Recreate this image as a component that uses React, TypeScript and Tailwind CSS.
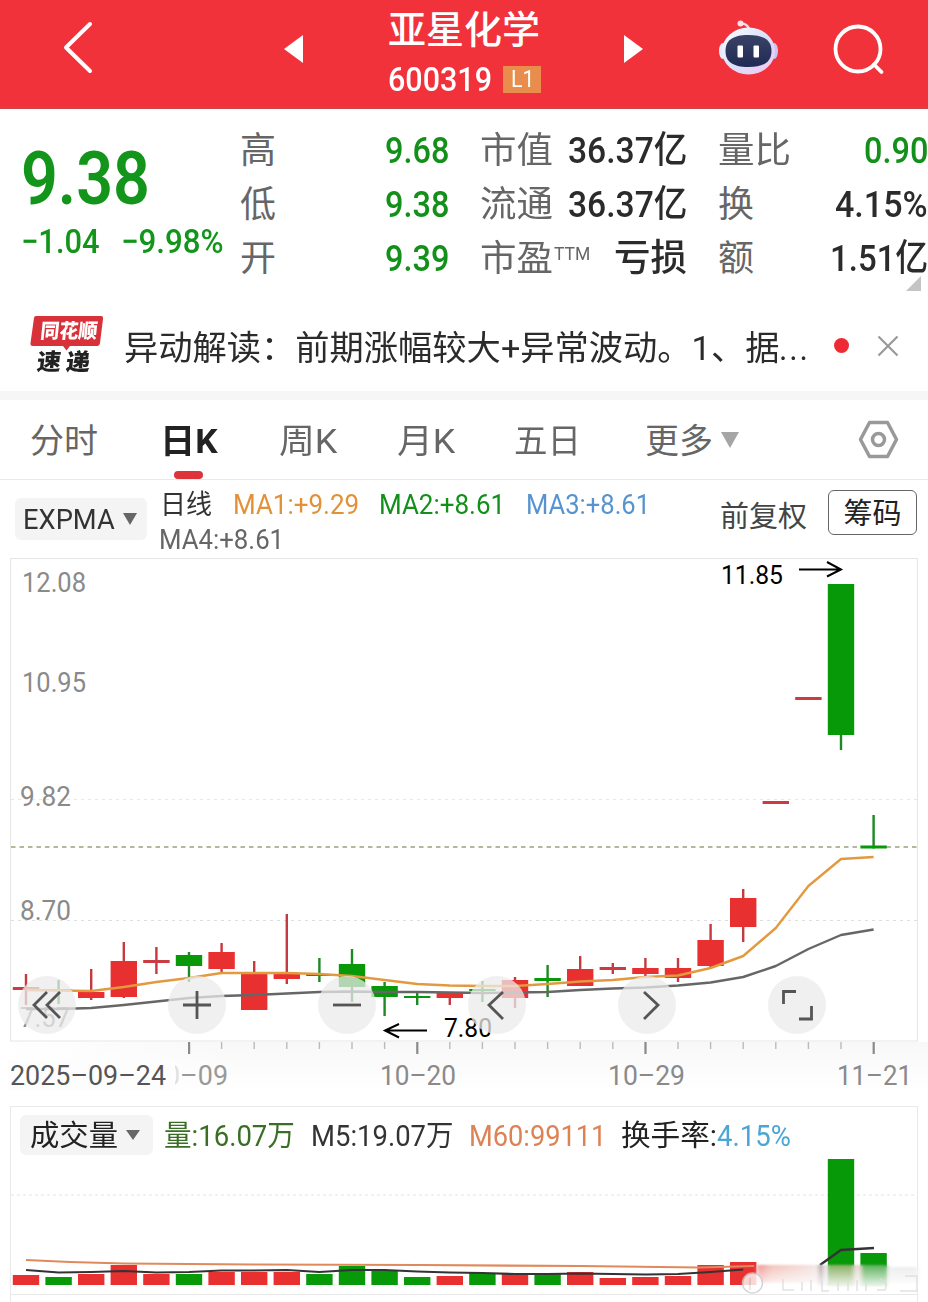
import { useLayoutEffect, useRef, useState, type ReactNode } from "react";

const FONT = "font-[Roboto,'Noto_Sans_CJK_SC',sans-serif]";
const RED = "#e93030";
const GREEN = "#079907";

/** Text squeezed or stretched horizontally to an exact width. */
function Fit({ w, className = "", children }: { w: number; className?: string; children: ReactNode }) {
  const ref = useRef<HTMLSpanElement>(null);
  const [scale, setScale] = useState(1);
  useLayoutEffect(() => {
    if (ref.current && ref.current.offsetWidth) setScale(w / ref.current.offsetWidth);
  }, [w]);
  return (
    <span className={`flex shrink-0 justify-start ${className}`} style={{ width: w }}>
      <span ref={ref} className="block shrink-0 origin-left leading-none whitespace-nowrap" style={{ transform: `scaleX(${scale})` }}>
        {children}
      </span>
    </span>
  );
}

const x = (i: number) => 26 + 32.6 * i;

type Candle = [number, number, number, number, "r" | "g"];
// high, body top, body bottom, low, colour
const CANDLES: Candle[] = [
  [974, 987, 990, 1005, "r"],
  [980, 989, 991, 1004, "g"],
  [969, 992, 998, 1000, "r"],
  [942, 961, 997, 998, "r"],
  [947, 960, 963, 974, "r"],
  [952, 955, 966, 982, "g"],
  [943, 952, 969, 973, "r"],
  [961, 974, 1010, 1010, "r"],
  [914, 974, 979, 984, "r"],
  [958, 974, 976, 982, "g"],
  [949, 964, 987, 1002, "g"],
  [982, 986, 997, 1016, "g"],
  [993, 996, 998, 1005, "g"],
  [992, 992, 998, 1005, "r"],
  [981, 989, 991, 1002, "g"],
  [977, 980, 998, 1008, "r"],
  [965, 978, 981, 997, "g"],
  [956, 969, 986, 986, "r"],
  [963, 967, 970, 974, "r"],
  [958, 968, 974, 976, "r"],
  [958, 968, 978, 982, "r"],
  [924, 940, 966, 969, "r"],
  [889, 898, 927, 942, "r"],
  [801, 801, 804, 804, "r"],
  [697, 697, 700, 700, "r"],
  [584, 584, 735, 750, "g"],
  [815, 845.5, 848.5, 848.5, "g"],
];

const MA1 = [990, 990.5, 991, 987, 982, 978, 973, 973, 973, 974, 976, 980, 984, 985.5, 986, 986, 984, 981.5, 980, 977, 975.5, 968, 956, 928, 886, 859, 857];
const MA4 = [1009, 1009, 1008, 1005, 1001.5, 998, 996, 995, 993.5, 992, 991.5, 992, 992, 992.5, 993, 992.5, 992, 990, 988.5, 987.5, 985.5, 982.5, 977, 966, 949, 935, 929.5];

const VOLUME: [number, number, "r" | "g"][] = [
  [0, 1275, "r"], [1, 1277, "g"], [2, 1274, "r"], [3, 1265, "r"], [4, 1274, "r"], [5, 1274, "g"],
  [6, 1272, "r"], [7, 1272, "r"], [8, 1272, "r"], [9, 1274, "g"], [10, 1266, "g"], [11, 1271, "g"],
  [12, 1277, "g"], [13, 1276, "r"], [14, 1273, "g"], [15, 1273, "r"], [16, 1274, "g"], [17, 1272, "r"],
  [18, 1278, "r"], [19, 1277, "r"], [20, 1276, "r"], [21, 1265, "r"], [22, 1262, "r"], [25, 1159, "g"],
  [26, 1253, "g"],
];
const M5 = [1270, 1272.5, 1272, 1271, 1272.5, 1272, 1270.5, 1270.5, 1270, 1272, 1270, 1270, 1271.5, 1272.5, 1273, 1274, 1274, 1273.5, 1274, 1274.5, 1274, 1272, 1269.5];

const line = (ys: number[]) => ys.map((y, i) => `${x(i)},${y}`).join(" ");
const tone = (c: "r" | "g") => (c === "r" ? RED : GREEN);

function Robot() {
  return (
    <svg width="60" height="58" viewBox="718 18 60 58" className="shrink-0">
      <defs>
        <linearGradient id="shell" x1="0" y1="0" x2="1" y2="1">
          <stop offset="0" stopColor="#fff" />
          <stop offset=".5" stopColor="#d9e2fb" />
          <stop offset="1" stopColor="#f3c4ef" />
        </linearGradient>
        <linearGradient id="visor" x1="0" y1="0" x2="0" y2="1">
          <stop offset="0" stopColor="#3a4266" />
          <stop offset="1" stopColor="#1f2a55" />
        </linearGradient>
      </defs>
      <path d="M741 23.500 Q748 23.500 749 30" fill="none" stroke="#fbd5dd" strokeWidth="2.500" />
      <circle cx="740.5" cy="23.5" r="3" fill="#fbe3ea" />
      <ellipse cx="723" cy="51" rx="4" ry="8" fill="#e6ebfc" />
      <ellipse cx="774" cy="51" rx="4" ry="8" fill="#c9c8f3" />
      <ellipse cx="748.500" cy="51" rx="26.500" ry="23.500" fill="url(#shell)" />
      <path d="M748.500 35 C765 35 771.500 41 771.500 51 C771.500 61 765 67 748.500 67 C732 67 725.500 61 725.500 51 C725.500 41 732 35 748.500 35 Z" fill="url(#visor)" />
      <rect x="737.500" y="45.500" width="5.500" height="12" rx="1" fill="#fff" />
      <rect x="753.500" y="45.500" width="5.500" height="12" rx="1" fill="#fff" />
    </svg>
  );
}

function Header() {
  return (
    <header className="flex h-[109px] items-center border-b-2 border-[#c9474c] bg-[#f2323a] text-white">
      <svg width="34" height="56" viewBox="60 20 34 56" className="mt-[-12px] ml-[60px] shrink-0" fill="none" stroke="#fff" strokeWidth="4" strokeLinecap="round" strokeLinejoin="round">
        <path d="M90 24 L66 47.500 L90 71" />
      </svg>
      <svg width="20" height="30" className="mt-[-9px] ml-[190px] shrink-0 self-center" viewBox="0 0 20 30">
        <path d="M0 15 L19 1 V29 Z" fill="#fff" />
      </svg>
      <div className="ml-[84px] flex h-full w-[154px] flex-col">
        <Fit w={152} className="mt-[11px] text-[38px] font-medium">亚星化学</Fit>
        <div className="mt-[13px] flex items-center">
          <Fit w={104} className="text-[34px] font-medium">600319</Fit>
          <span className="ml-[11px] flex h-[27px] w-[38px] items-center justify-center bg-[#e98d4c]">
            <Fit w={23} className="text-[24px]">L1</Fit>
          </span>
        </div>
      </div>
      <svg width="20" height="30" className="mt-[-9px] ml-[81px] shrink-0" viewBox="0 0 20 30">
        <path d="M20 15 L1 1 V29 Z" fill="#fff" />
      </svg>
      <div className="mt-[-14px] ml-[75px] flex items-center">
        <Robot />
        <svg width="54" height="54" viewBox="832 21 54 54" className="mt-[4px] ml-[54px]" fill="none" stroke="#fff" strokeWidth="3.800">
          <circle cx="858" cy="48" r="22.500" />
          <path d="M874 63.500 L881.500 71" strokeLinecap="round" />
        </svg>
      </div>
    </header>
  );
}

function Stat({ label, lw, value, vw, green, sup }: { label: string; lw: number; value: string; vw: number; green?: boolean; sup?: string }) {
  return (
    <div className="flex h-[54px] items-center justify-between">
      <div className="mt-[2px] flex items-start">
        <Fit w={lw} className="text-[36px] text-[#666]">{label}</Fit>
        {sup && <Fit w={36} className="mt-[3px] ml-[1px] text-[19px] text-[#666]">{sup}</Fit>}
      </div>
      <Fit w={vw} className={`mt-[1px] text-[37px] font-medium ${green ? "text-[#12901a]" : "text-[#2b2b2b]"}`}>{value}</Fit>
    </div>
  );
}

function Quote() {
  return (
    <section className="relative flex h-[191px]">
      <div className="w-[240px] pt-[33px] pl-[21px] text-[#12951a]">
        <Fit w={129} className="text-[74px] font-semibold">9.38</Fit>
        <div className="mt-[8px] flex">
          <Fit w={79} className="text-[34px] font-medium">−1.04</Fit>
          <Fit w={103} className="ml-[21px] text-[34px] font-medium">−9.98%</Fit>
        </div>
      </div>
      <div className="w-[209px] pt-[14px]">
        <Stat label="高" lw={36} value="9.68" vw={64} green />
        <Stat label="低" lw={36} value="9.38" vw={64} green />
        <Stat label="开" lw={36} value="9.39" vw={64} green />
      </div>
      <div className="ml-[31px] w-[207px] pt-[14px]">
        <Stat label="市值" lw={73} value="36.37亿" vw={119} />
        <Stat label="流通" lw={73} value="36.37亿" vw={119} />
        <Stat label="市盈" lw={73} value="亏损" vw={73} sup="TTM" />
      </div>
      <div className="ml-[31px] w-[210px] pt-[14px]">
        <Stat label="量比" lw={73} value="0.90" vw={64} green />
        <Stat label="换" lw={36} value="4.15%" vw={93} />
        <Stat label="额" lw={36} value="1.51亿" vw={98} />
      </div>
      <svg width="15" height="15" className="absolute top-[167px] left-[906px]" viewBox="0 0 15 15">
        <path d="M15 0 V15 H0 Z" fill="#c4c4c4" />
      </svg>
    </section>
  );
}

function News() {
  return (
    <section className="flex h-[91px] items-center">
      <div className="relative ml-[30px] h-[62px] w-[74px]">
        <svg width="74" height="62" viewBox="30 315 74 62" className="absolute inset-0">
          <path d="M36 316 H101 Q103.500 316 103 319 L100 343 Q99.500 346 97 346 H70 L66.500 350.500 L63 346 H33 Q30 346 30.500 343 L34 318 Q34 316 36 316 Z" fill="#d8313a" />
        </svg>
        <div className="relative flex -skew-x-6 flex-col">
          <Fit w={57} className="mt-[6px] ml-[9px] text-[20px] font-black text-white">同花顺</Fit>
          <div className="mt-[10px] ml-[9px] flex gap-[5px] text-[23px] font-black text-[#222]">
            <Fit w={24}>速</Fit>
            <Fit w={24}>递</Fit>
          </div>
        </div>
      </div>
      <div className="mt-[4px] ml-[20px] flex items-center text-[34px] text-[#2b2b2b]">
        <Fit w={655}>异动解读：前期涨幅较大+异常波动。1、据</Fit>
        <Fit w={31} className="tracking-[2px]">...</Fit>
      </div>
      <span className="ml-[24px] size-[15px] rounded-full bg-[#ee2b32]" />
      <svg width="22" height="22" viewBox="0 0 22 22" className="ml-[28px]" stroke="#999" strokeWidth="2.200">
        <path d="M1.500 1.500 L20.500 20.500 M20.500 1.500 L1.500 20.500" />
      </svg>
    </section>
  );
}

function Tabs() {
  return (
    <nav className="flex h-[80px] items-center border-b border-[#e9e9e9] pt-[2px] pl-[30px] text-[34px] text-[#666]">
      <Fit w={68}>分时</Fit>
      <div className="relative ml-[62px]">
        <Fit w={58} className="font-bold text-[#222]">日K</Fit>
        <span className="absolute top-[47px] left-[14px] h-[8px] w-[29px] rounded-full bg-[#dd333a]" />
      </div>
      <Fit w={58} className="ml-[61px]">周K</Fit>
      <Fit w={58} className="ml-[60px]">月K</Fit>
      <Fit w={67} className="ml-[59px]">五日</Fit>
      <Fit w={68} className="ml-[64px]">更多</Fit>
      <svg width="18" height="16" viewBox="0 0 18 16" className="mt-[-2px] ml-[8px]">
        <path d="M0 0 H18 L9 16 Z" fill="#a5a5a5" />
      </svg>
      <svg width="42" height="42" viewBox="857 418 42 42" className="mt-[-3px] ml-[118px]" fill="none" stroke="#999" strokeWidth="3.500" strokeLinejoin="round">
        <path d="M869.500 422.500 H887.500 L896.500 439.500 L887.500 456.500 H869.500 L860.500 439.500 Z" />
        <circle cx="878.500" cy="439.500" r="6" />
      </svg>
    </nav>
  );
}

function Indicators() {
  return (
    <section className="flex h-[78px] items-start">
      <div className="mt-[18px] ml-[15px] flex h-[42px] w-[132px] items-center rounded-[6px] bg-[#f4f4f4] pl-[8px]">
        <Fit w={92} className="mt-[3px] text-[27px] text-[#333]">EXPMA</Fit>
        <svg width="14" height="12" viewBox="0 0 14 12" className="ml-[8px]"><path d="M0 0 H14 L7 12 Z" fill="#666" /></svg>
      </div>
      <div className="ml-[13px] w-[500px] pt-[12px]">
        <div className="flex text-[27px]">
          <Fit w={52} className="text-[#333]">日线</Fit>
          <Fit w={126} className="ml-[21px] text-[#e39136]">MA1:+9.29</Fit>
          <Fit w={126} className="ml-[20px] text-[#12901a]">MA2:+8.61</Fit>
          <Fit w={124} className="ml-[21px] text-[#5794cf]">MA3:+8.61</Fit>
        </div>
        <Fit w={125} className="mt-[8px] ml-[-1px] text-[27px] text-[#666]">MA4:+8.61</Fit>
      </div>
      <Fit w={87} className="mt-[23px] ml-[60px] text-[29px] text-[#444]">前复权</Fit>
      <div className="mt-[10px] ml-[21px] flex h-[45px] w-[89px] items-center justify-center rounded-[6px] border border-[#666] pt-[4px]">
        <Fit w={58} className="text-[29px] text-[#222]">筹码</Fit>
      </div>
    </section>
  );
}

function ChartText({ x: tx, y, w, size = 27, fill = "#8a8a8a", weight = 400, children }: { x: number; y: number; w: number; size?: number; fill?: string; weight?: number; children: string }) {
  return (
    <text x={tx} y={y} fontSize={size} fontWeight={weight} fill={fill} textLength={w} lengthAdjust="spacingAndGlyphs">{children}</text>
  );
}

const ICONS = [
  <path key="a" d="M29 16 L16 29 L29 42 M42 16 L29 29 L42 42" />,
  <path key="b" d="M15 29 H43 M29 15 V43" />,
  <path key="c" d="M15 29 H43" />,
  <path key="d" d="M35 16 L21 29 L35 43" />,
  <path key="e" d="M26 16 L40 29 L26 43" />,
  <path key="f" d="M15.500 28 V15.500 H28 M43.500 30 V43 H31" />,
];

function PriceChart() {
  return (
    <section className="relative h-[546px]">
      <svg width="928" height="546" viewBox="0 558 928 546" className="block">
        <defs>
          <linearGradient id="floor" x1="0" y1="0" x2="0" y2="1">
            <stop offset="0" stopColor="#f8f8f8" />
            <stop offset="1" stopColor="#fff" />
          </linearGradient>
          <linearGradient id="edge" x1="0" y1="0" x2="1" y2="0">
            <stop offset="0" stopColor="#fff" />
            <stop offset="1" stopColor="#fff" stopOpacity="0" />
          </linearGradient>
        </defs>
        <rect x="0" y="1042" width="928" height="50" fill="url(#floor)" />
        <rect x="0" y="1042" width="240" height="50" fill="url(#edge)" />
        <rect x="10.500" y="558.500" width="907" height="482.500" fill="none" stroke="#e6e6e6" />
        <g stroke="#dedede" strokeDasharray="3 4">
          <path d="M11 799.500 H917" strokeOpacity=".7" />
          <path d="M11 920.500 H917" />
        </g>
        <path d="M11 847 H917" stroke="#a0a07c" strokeWidth="1.500" strokeDasharray="4.500 4" />
        <ChartText x={22} y={592} w={64}>12.08</ChartText>
        <ChartText x={22} y={692} w={64}>10.95</ChartText>
        <ChartText x={20} y={806} w={51}>9.82</ChartText>
        <ChartText x={20} y={920} w={51}>8.70</ChartText>
        <ChartText x={20} y={1027} w={50}>7.57</ChartText>
        {CANDLES.map(([hi, top, bottom, lo, c], i) => (
          <g key={i} fill={tone(c)}>
            <rect x={x(i) - 1.2} y={hi} width="2.400" height={lo - hi} fill={c === "r" ? "#c53a40" : "#1b8a22"} />
            <rect x={x(i) - 13.2} y={top} width="26.400" height={bottom - top} fill={bottom - top < 4 && c === "r" ? "#c93c42" : tone(c)} />
          </g>
        ))}
        <polyline points={line(MA4)} fill="none" stroke="#666" strokeWidth="2.400" strokeLinejoin="round" />
        <polyline points={line(MA1)} fill="none" stroke="#e39a3f" strokeWidth="2.400" strokeLinejoin="round" />
        <g stroke="#000" strokeWidth="2" fill="none">
          <path d="M799 569.500 H841 M827 562 L841 569.500 L827 576.500" />
          <path d="M427 1030.500 H385 M399 1024 L385 1030.500 L399 1037.500" />
        </g>
        <ChartText x={721} y={584} w={62} size={26} fill="#000">11.85</ChartText>
        <ChartText x={444} y={1037} w={48} size={25} fill="#000">7.80</ChartText>
        {CANDLES.slice(5).map((_, k) => {
          const major = k % 7 === 0;
          return <rect key={k} x={x(k + 5) - (major ? 1 : 0.7)} y="1042" width={major ? 2.2 : 1.4} height={major ? 12 : 7} fill={major ? "#8a8a8a" : "#bbb"} />;
        })}
        <ChartText x={165} y={1085} w={63} size={28} fill="#999">0–09</ChartText>
        <rect x="8" y="1060" width="167" height="30" fill="#fdfdfd" />
        <rect x="174" y="1060" width="8" height="30" fill="#fdfdfd" opacity=".7" />
        <ChartText x={10} y={1085} w={156} size={28} fill="#555">2025–09–24</ChartText>
        <ChartText x={380} y={1085} w={76} size={28}>10–20</ChartText>
        <ChartText x={608} y={1085} w={77} size={28}>10–29</ChartText>
        <ChartText x={837} y={1085} w={75} size={28}>11–21</ChartText>
      </svg>
      <div className="absolute top-[418px] left-[18px] flex gap-[92px]">
        {ICONS.map((icon, i) => (
          <button key={i} className="size-[58px] rounded-full bg-[#ebebeb]/75">
            <svg width="58" height="58" viewBox="0 0 58 58" fill="none" stroke="#555" strokeWidth="2.800">{icon}</svg>
          </button>
        ))}
      </div>
    </section>
  );
}

function VolumeChart() {
  return (
    <section className="relative h-[198px] overflow-hidden">
      <svg width="928" height="198" viewBox="0 1104 928 198" className="absolute inset-0">
        <defs>
          <linearGradient id="smear" x1="0" y1="0" x2="1" y2="0">
            <stop offset="0" stopColor="#e88" />
            <stop offset=".2" stopColor="#f2c0b8" />
            <stop offset=".7" stopColor="#f3dcd8" />
            <stop offset="1" stopColor="#eee" />
          </linearGradient>
          <linearGradient id="veil" x1="0" y1="0" x2="0" y2="1">
            <stop offset="0" stopColor="#fff" stopOpacity="0" />
            <stop offset="1" stopColor="#fff" />
          </linearGradient>
          <filter id="soft" x="-10%" y="-40%" width="120%" height="180%"><feGaussianBlur stdDeviation="2 1" /></filter>
        </defs>
        <rect x="10.500" y="1106.500" width="907" height="188" fill="none" stroke="#e9e9e9" />
        <path d="M10.500 1295 V1302 M917.500 1295 V1302" stroke="#e9e9e9" />
        <path d="M11 1195 H917" stroke="#e4e4e4" strokeDasharray="3 3" />
        {VOLUME.map(([i, top, c]) => (
          <rect key={i} x={x(i) - 13.2} y={top} width="26.400" height={1285 - top} fill={tone(c)} />
        ))}
        <polyline points="26,1260 70,1262 124,1263.500 254,1264.500 420,1265 580,1266 700,1267.500 754,1266" fill="none" stroke="#df8a5c" strokeWidth="2.200" />
        <polyline points={line(M5)} fill="none" stroke="#333" strokeWidth="2.200" />
        <polyline points="820,1265 841,1250 874,1248" fill="none" stroke="#333" strokeWidth="2.400" />
        <g filter="url(#soft)">
          <rect x="757" y="1265" width="70" height="18" fill="url(#smear)" />
          <rect x="819" y="1265" width="4" height="21" fill="#9c7f84" />
          <rect x="828" y="1265" width="26" height="22" fill="#86ad5e" />
          <rect x="854" y="1265" width="7" height="20" fill="#ead9d4" />
          <rect x="861" y="1265" width="26" height="22" fill="#55ae55" />
          <rect x="888" y="1267" width="30" height="16" fill="#ececec" />
        </g>
        <rect x="757" y="1264" width="163" height="25" fill="url(#veil)" />
        <g fill="none" stroke="#dcdcdc" strokeWidth="1.500" opacity=".8">
          <circle cx="752.500" cy="1283" r="10" fill="#fff" stroke="#ccc" />
          <path d="M750 1278 V1290 M783 1279 V1290 H794 M802 1282 V1291 M811 1280 V1291 M822 1281 V1291 H829 M838 1281 V1291 M848 1281 V1291 M857 1280 V1291 M866 1282 V1291 M880 1279 Q889 1282 885 1290 H877 M900 1291 H917 V1276 H905" />
        </g>
      </svg>
      <div className="relative flex h-[62px] items-center pl-[20px]">
        <div className="flex h-[40px] w-[133px] items-center rounded-[6px] bg-[#f4f4f4] pl-[10px]">
          <Fit w={88} className="mt-[3px] text-[29px] text-[#222]">成交量</Fit>
          <svg width="14" height="10" viewBox="0 0 14 10" className="ml-[8px]"><path d="M0 0 H14 L7 10 Z" fill="#666" /></svg>
        </div>
        <div className="mt-[2px] flex text-[29px]">
          <Fit w={131} className="ml-[11px] text-[#3b6e25]">量:16.07万</Fit>
          <Fit w={142} className="ml-[16px] text-[#333]">M5:19.07万</Fit>
          <Fit w={137} className="ml-[16px] text-[#dd8254]">M60:99111</Fit>
          <Fit w={96} className="ml-[15px] text-[#222]">换手率:</Fit>
          <Fit w={74} className="text-[#4ba6d4]">4.15%</Fit>
        </div>
      </div>
    </section>
  );
}

export default function App() {
  return (
    <main className={`h-[1302px] w-[928px] overflow-hidden bg-white ${FONT}`}>
      <Header />
      <Quote />
      <News />
      <div className="h-[9px] bg-[#f6f6f6]" />
      <Tabs />
      <Indicators />
      <PriceChart />
      <VolumeChart />
    </main>
  );
}
